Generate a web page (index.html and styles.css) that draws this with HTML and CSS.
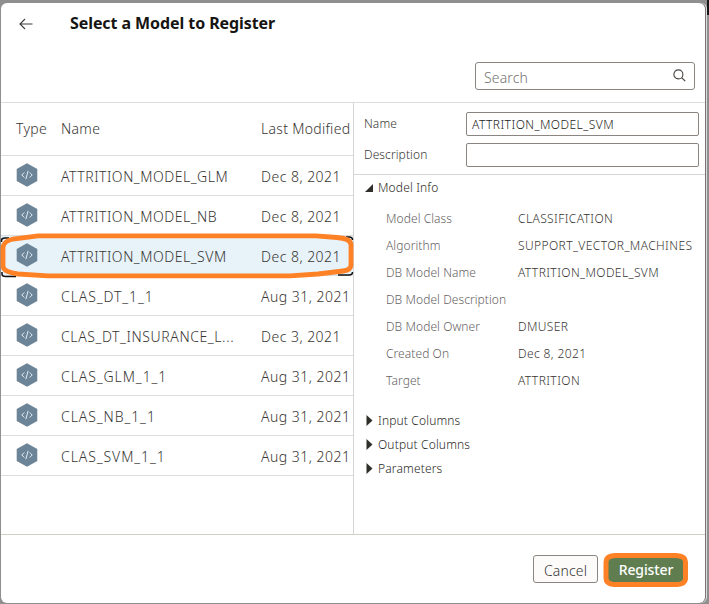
FILE: index.html
```html
<!DOCTYPE html>
<html lang="en">
<head>
<meta charset="utf-8">
<title>Select a Model to Register</title>
<link rel="stylesheet" href="styles.css">
</head>
<body>
<svg class="defs" aria-hidden="true">
  <symbol id="model" viewBox="0 0 22 24">
    <path d="M11 0.2 21.3 6v12L11 23.8 0.7 18V6z" fill="#6c8497"/>
    <path d="M8.3 9.5 5.8 12l2.5 2.5M13.7 9.5l2.5 2.5-2.5 2.5M12.1 7.8 9.9 16.2" fill="none" stroke="#e8eef2" stroke-width="1"/>
  </symbol>
</svg>
<div class="backdrop-corner"></div>
<main class="dialog">
  <header class="header">
    <div class="title-row">
      <svg class="back" viewBox="0 0 14 12"><path d="M13.5 6H1M6 1 1 6l5 5" fill="none" stroke="#3f3c3a" stroke-width="1.1"/></svg>
      <h1>Select a Model to Register</h1>
    </div>
    <div class="search">
      <span>Search</span>
      <svg viewBox="0 0 13 13"><circle cx="5.4" cy="5.4" r="4.5" fill="none" stroke="#45413e" stroke-width="1.1"/><path d="m8.6 8.6 3.6 3.6" stroke="#45413e" stroke-width="1.2"/></svg>
    </div>
  </header>
  <div class="content">
    <section class="models">
      <div class="row head"><span>Type</span><span>Name</span><span class="modified">Last Modified</span></div>
      <div class="row"><svg class="hex"><use href="#model"/></svg><span class="model">ATTRITION_MODEL_GLM</span><span class="date">Dec 8, 2021</span></div>
      <div class="row"><svg class="hex"><use href="#model"/></svg><span class="model">ATTRITION_MODEL_NB</span><span class="date">Dec 8, 2021</span></div>
      <div class="row selected"><svg class="hex"><use href="#model"/></svg><span class="model">ATTRITION_MODEL_SVM</span><span class="date">Dec 8, 2021</span>
        <svg class="marker" viewBox="0 0 355 46">
          <path d="M1.5 9V7.5Q1.5 5 5 5H9M2 39v2q0 2.5 4 2.5H16M346 4h3q3.5 0 3.5 3M338 42h11q3.5 0 3.5-3" fill="none" stroke="#111" stroke-width="1.5"/>
          <path d="M38 2.8H316L337 4.5Q351 5.5 351 12V32Q351 37 343 38L318 41 290 42.8H48L18 41Q3 39 3 33V14Q4 8 13 6Z" fill="none" stroke="#ff8126" stroke-width="4.8"/>
        </svg>
      </div>
      <div class="row"><svg class="hex"><use href="#model"/></svg><span class="model wide">CLAS_DT_1_1</span><span class="date">Aug 31, 2021</span></div>
      <div class="row"><svg class="hex"><use href="#model"/></svg><span class="model long">CLAS_DT_INSURANCE_L...</span><span class="date">Dec 3, 2021</span></div>
      <div class="row"><svg class="hex"><use href="#model"/></svg><span class="model wide">CLAS_GLM_1_1</span><span class="date">Aug 31, 2021</span></div>
      <div class="row"><svg class="hex"><use href="#model"/></svg><span class="model wide">CLAS_NB_1_1</span><span class="date">Aug 31, 2021</span></div>
      <div class="row"><svg class="hex"><use href="#model"/></svg><span class="model wide">CLAS_SVM_1_1</span><span class="date">Aug 31, 2021</span></div>
    </section>
    <section class="details">
      <div class="form">
        <span>Name</span><div class="input">ATTRITION_MODEL_SVM</div>
        <span>Description</span><div class="input"></div>
      </div>
      <div class="section info"><svg class="tri" viewBox="0 0 9 8"><path d="M8 0v8H0z"/></svg><span>Model Info</span></div>
      <dl>
        <dt>Model Class</dt><dd>CLASSIFICATION</dd>
        <dt>Algorithm</dt><dd>SUPPORT_VECTOR_MACHINES</dd>
        <dt>DB Model Name</dt><dd>ATTRITION_MODEL_SVM</dd>
        <dt>DB Model Description</dt><dd></dd>
        <dt>DB Model Owner</dt><dd>DMUSER</dd>
        <dt>Created On</dt><dd>Dec 8, 2021</dd>
        <dt>Target</dt><dd>ATTRITION</dd>
      </dl>
      <div class="section"><svg class="tri shut" viewBox="0 0 7 11"><path d="M0.5 0 6.5 5.5 0.5 11z"/></svg><span>Input Columns</span></div>
      <div class="section"><svg class="tri shut" viewBox="0 0 7 11"><path d="M0.5 0 6.5 5.5 0.5 11z"/></svg><span>Output Columns</span></div>
      <div class="section"><svg class="tri shut" viewBox="0 0 7 11"><path d="M0.5 0 6.5 5.5 0.5 11z"/></svg><span>Parameters</span></div>
    </section>
  </div>
  <footer class="footer">
    <div class="button cancel">Cancel</div>
    <div class="button register">Register
      <svg class="ring" viewBox="0 0 86 36"><path d="M12 3.5H73Q82.500 4 82.500 10V27Q82 32 74 32.500H11Q3 32 3 26V10Q3 4 12 3.500Z" fill="none" stroke="#ff8126" stroke-width="5"/></svg>
    </div>
  </footer>
</main>
</body>
</html>
```

FILE: styles.css
```css
* { box-sizing: border-box; }
body {
  margin: 0;
  padding: 3px 3px 1px 1px;
  height: 604px;
  overflow: hidden;
  background: #8f8f8f;
  font-family: "Noto Sans", "Open Sans", sans-serif;
  font-weight: 350;
  color: #383532;
}
.defs { position: absolute; width: 0; height: 0; }
.backdrop-corner { position: absolute; right: 0; top: 0; width: 2px; height: 15px; background: #171717; }
.dialog {
  width: 704px;
  height: 600px;
  background: #fff;
  border-radius: 6px;
  box-shadow: 1px 0 0 #777, 2px 0 0 #ddd;
  display: flex;
  flex-direction: column;
}
.header { height: 100px; border-bottom: 1px solid #dcdcdc; }
.title-row { display: flex; align-items: center; height: 40px; padding-left: 18px; }
.back { width: 14px; height: 12px; margin: 1px 37px 0 0; }
h1 { margin: 0; font-size: 16px; line-height: 22px; font-weight: 700; color: #161513; letter-spacing: -0.08px; }
.search {
  margin: 19px 10px 0 auto;
  width: 220px;
  height: 28px;
  border: 1px solid #8a8580;
  border-radius: 3px;
  display: flex;
  justify-content: space-between;
  padding: 0 8px;
  font-size: 14px;
  line-height: 29px;
  color: #767370;
  letter-spacing: 0.15px;
}
.search svg { width: 13px; height: 13px; margin-top: 6px; }
.content { display: flex; height: 431px; }
.models { width: 353px; border-right: 1px solid #d5d5d5; }
.row {
  display: grid;
  grid-template-columns: 45px 200px 1fr;
  height: 40px;
  padding-left: 15px;
  border-bottom: 1px solid #dcdedf;
  position: relative;
  font-size: 14px;
  line-height: 41px;
  white-space: nowrap;
  letter-spacing: 0.52px;
}
.head { height: 53px; line-height: 52px; letter-spacing: 0.3px; }
.hex { width: 22px; height: 24px; margin-top: 7px; }
.model { line-height: 42px; }
.wide { letter-spacing: 0.92px; }
.long { letter-spacing: 0.6px; }
.date { letter-spacing: 0.48px; }
.selected { background: #e7f2f9; }
.marker { position: absolute; left: -1px; top: -3px; width: 355px; height: 46px; z-index: 1; }
.details { width: 351px; }
.form {
  height: 72px;
  border-bottom: 1px solid #d5d5d5;
  display: grid;
  grid-template-columns: 102px 233px;
  grid-auto-rows: 24px;
  row-gap: 7px;
  padding: 9px 0 0 10px;
  font-size: 12px;
  line-height: 24px;
  letter-spacing: 0.1px;
}
.input { border: 1px solid #8a8580; border-radius: 2px; padding-left: 5px; line-height: 24px; color: #242220; letter-spacing: 0.45px; }
.section { display: flex; height: 24px; line-height: 24px; padding-left: 11px; font-size: 12px; color: #2a2826; letter-spacing: 0.15px; }
.tri { width: 9px; height: 8px; margin: 9px 4px 0 0; fill: #302e2a; }
.shut { width: 7px; height: 11px; margin: 6px 5px 0 1px; }
.info { height: 30px; line-height: 25px; }
dl { margin: 0 0 15px; padding-left: 32px; display: grid; grid-template-columns: 132px 1fr; grid-auto-rows: 27px; font-size: 12px; line-height: 27px; }
dt { color: #66625f; white-space: nowrap; letter-spacing: 0.07px; }
dd { margin: 0; white-space: nowrap; letter-spacing: 0.4px; }
.footer { flex: 1; border-top: 1px solid #cfcfc8; display: flex; align-items: flex-start; justify-content: flex-end; gap: 10px; padding: 20px 21px 0 0; }
.button { position: relative; height: 28px; border-radius: 3px; text-align: center; font-size: 14px; line-height: 29px; }
.cancel { width: 65px; border: 1px solid #8a8580; background: #fcfbfa; letter-spacing: 0.15px; }
.register { width: 76px; background: #5f7d4f; color: #fff; font-weight: 500; line-height: 30px; letter-spacing: -0.1px; }
.ring { position: absolute; left: -5px; top: -3px; width: 86px; height: 36px; }
```
